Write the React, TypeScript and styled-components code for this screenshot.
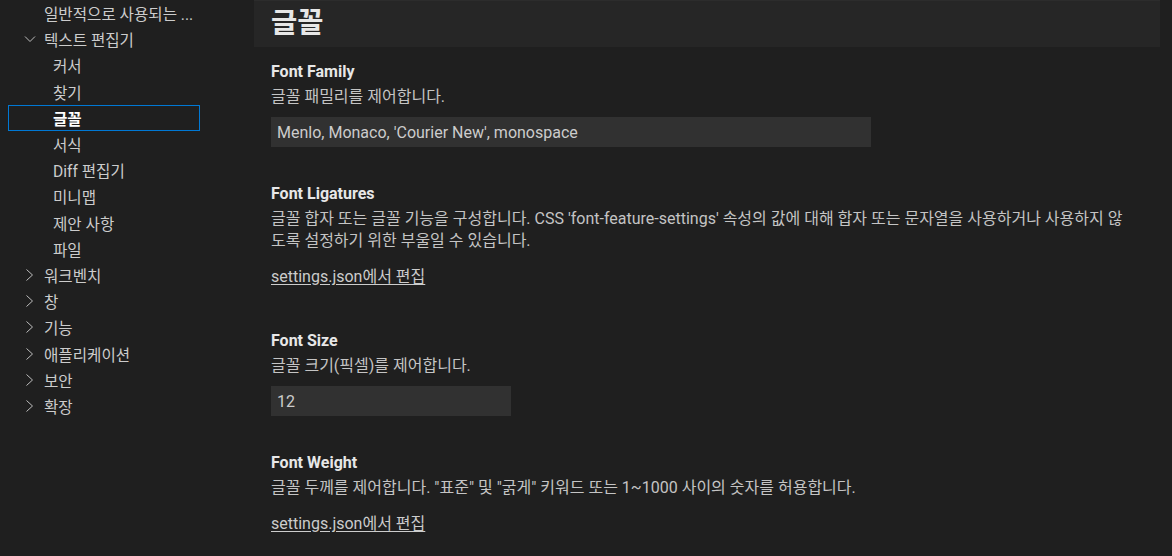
import React from "react";
import styled, { createGlobalStyle } from "styled-components";

const Global = createGlobalStyle`
  html, body { margin: 0; padding: 0; background: #1f1f1f; }
  body {
    font-family: "Roboto", "Noto Sans CJK KR", sans-serif;
    color: #cccccc;
    -webkit-font-smoothing: antialiased;
  }
`;

const Page = styled.div`
  display: grid;
  grid-template-columns: 254px 1fr;
  width: 1172px;
  height: 556px;
  overflow: hidden;
  background: #1f1f1f;
`;

const Sidebar = styled.nav`
  padding-left: 8px;
  display: flex;
  flex-direction: column;
`;

const Row = styled.div<{ $level: number; $selected?: boolean }>`
  width: 192px;
  height: 26.2px;
  box-sizing: border-box;
  display: flex;
  align-items: center;
  padding-left: ${(p) => (p.$level === 1 ? 14 : 45)}px;
  font-size: 15.6px;
  color: ${(p) => (p.$selected ? "#ffffff" : "#cccccc")};
  font-weight: ${(p) => (p.$selected ? 700 : 400)};
  box-shadow: ${(p) => (p.$selected ? "inset 0 0 0 1px #0078d4" : "none")};
  white-space: nowrap;
`;

const Chevron = styled.svg`
  width: 16px;
  height: 16px;
  flex: none;
  margin-right: 6px;
`;

const Spacer = styled.span`
  width: 22px;
  flex: none;
`;

const Main = styled.main`
  padding-right: 12px;
  display: flex;
  flex-direction: column;
  min-width: 0;
`;

const HeaderBand = styled.header`
  height: 47px;
  background: #262626;
  border-top: 1px solid #2c2c2c;
  box-sizing: border-box;
  display: flex;
  align-items: center;
  padding-left: 17px;
`;

const Heading = styled.h1`
  margin: 0;
  font-size: 28.5px;
  font-weight: 700;
  color: #e7e7e7;
  line-height: 1;
`;

const Content = styled.div`
  padding: 15px 0 0 17px;
  display: flex;
  flex-direction: column;
`;

const Setting = styled.section`
  padding-bottom: 37px;
  display: flex;
  flex-direction: column;
  align-items: flex-start;
`;

const Title = styled.div`
  font-size: 16px;
  font-weight: 700;
  line-height: 20px;
  color: #e7e7e7;
`;

const Desc = styled.div`
  margin-top: 4px;
  font-size: 16px;
  line-height: 22px;
  color: #c4c4c4;
  white-space: nowrap;
`;

const Input = styled.div<{ $width: number }>`
  margin-top: 9px;
  width: ${(p) => p.$width}px;
  height: 30px;
  box-sizing: border-box;
  background: #313131;
  padding-left: 6px;
  display: flex;
  align-items: center;
  font-size: 16px;
  color: #cccccc;
`;

const Link = styled.a`
  margin-top: 14px;
  margin-bottom: 6px;
  font-size: 16px;
  line-height: 22px;
  color: #cccccc;
  text-decoration: underline;
  text-underline-offset: 2px;
`;

const ChevronIcon = ({ open }: { open?: boolean }) => (
  <Chevron viewBox="0 0 16 16">
    <polyline
      points={open ? "3,5.5 8,10.5 13,5.5" : "4.5,2.5 10.5,8 4.5,13.5"}
      fill="none"
      stroke="#bdbdbd"
      strokeWidth="1"
    />
  </Chevron>
);

type Item = { label: string; level: number; chevron?: "open" | "closed" | "none"; selected?: boolean };

const items: Item[] = [
  { label: "일반적으로 사용되는 ...", level: 1, chevron: "none" },
  { label: "텍스트 편집기", level: 1, chevron: "open" },
  { label: "커서", level: 2 },
  { label: "찾기", level: 2 },
  { label: "글꼴", level: 2, selected: true },
  { label: "서식", level: 2 },
  { label: "Diff 편집기", level: 2 },
  { label: "미니맵", level: 2 },
  { label: "제안 사항", level: 2 },
  { label: "파일", level: 2 },
  { label: "워크벤치", level: 1, chevron: "closed" },
  { label: "창", level: 1, chevron: "closed" },
  { label: "기능", level: 1, chevron: "closed" },
  { label: "애플리케이션", level: 1, chevron: "closed" },
  { label: "보안", level: 1, chevron: "closed" },
  { label: "확장", level: 1, chevron: "closed" },
];

export default function App() {
  return (
    <>
      <Global />
      <Page>
        <Sidebar>
          {items.map((it) => (
            <Row key={it.label} $level={it.level} $selected={it.selected}>
              {it.level === 1 &&
                (it.chevron === "none" ? (
                  <Spacer />
                ) : (
                  <ChevronIcon open={it.chevron === "open"} />
                ))}
              {it.label}
            </Row>
          ))}
        </Sidebar>
        <Main>
          <HeaderBand>
            <Heading>글꼴</Heading>
          </HeaderBand>
          <Content>
            <Setting>
              <Title>Font Family</Title>
              <Desc>글꼴 패밀리를 제어합니다.</Desc>
              <Input $width={600}>Menlo, Monaco, 'Courier New', monospace</Input>
            </Setting>
            <Setting>
              <Title>Font Ligatures</Title>
              <Desc>
                글꼴 합자 또는 글꼴 기능을 구성합니다. CSS 'font-feature-settings' 속성의 값에 대해 합자 또는 문자열을 사용하거나 사용하지 않
                <br />
                도록 설정하기 위한 부울일 수 있습니다.
              </Desc>
              <Link>settings.json에서 편집</Link>
            </Setting>
            <Setting>
              <Title>Font Size</Title>
              <Desc>글꼴 크기(픽셀)를 제어합니다.</Desc>
              <Input $width={240}>12</Input>
            </Setting>
            <Setting>
              <Title>Font Weight</Title>
              <Desc>글꼴 두께를 제어합니다. "표준" 및 "굵게" 키워드 또는 1~1000 사이의 숫자를 허용합니다.</Desc>
              <Link>settings.json에서 편집</Link>
            </Setting>
          </Content>
        </Main>
      </Page>
    </>
  );
}
